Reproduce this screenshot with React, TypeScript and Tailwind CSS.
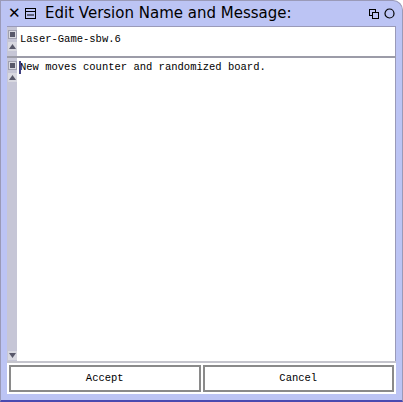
import React from 'react';

function Gutter({ children }: { children?: React.ReactNode }) {
  return <div className="w-[10px] shrink-0 bg-[#c6c6d6] flex flex-col items-center">{children}</div>;
}

function SqBtn() {
  return (
    <div className="w-[9px] h-[9px] bg-[#d8d8e0] border border-[#a0a0b0] flex items-center justify-center">
      <div className="w-[5px] h-[5px] bg-[#58586a]" />
    </div>
  );
}

function Arrow({ up }: { up?: boolean }) {
  return (
    <div className="w-[9px] h-[9px] bg-[#d8d8e0] flex items-center justify-center">
      <svg width="7" height="5" viewBox="0 0 7 5">
        <polygon points={up ? '3.5,0 7,5 0,5' : '0,0 7,0 3.5,5'} fill="#58586a" />
      </svg>
    </div>
  );
}

export default function App() {
  const mono = { fontFamily: '"Courier New", "Liberation Mono", monospace' };
  return (
    <div className="w-[403px] h-[402px] bg-white">
      <div className="w-[403px] h-[402px] rounded-tr-[10px] bg-[#bcc4f4] border border-[#9a9ab8] border-b-[2px] border-b-[#4a4ab0] flex flex-col">
        {/* title bar */}
        <div className="h-[25px] flex items-center px-[6px] text-black" style={{ fontFamily: '"DejaVu Sans", sans-serif' }}>
          <span className="text-[15px] leading-none w-[14px] ml-[1px]">✕</span>
          <svg width="11" height="11" viewBox="0 0 11 11" className="ml-[3px]">
            <rect x="0.5" y="0.5" width="10" height="10" fill="none" stroke="#000" />
            <line x1="0" y1="3.5" x2="11" y2="3.5" stroke="#000" />
            <line x1="2" y1="7" x2="9" y2="7" stroke="#000" />
          </svg>
          <span className="ml-[9px] text-[15px] leading-none">Edit Version Name and Message:</span>
          <div className="flex-1" />
          <svg width="10" height="10" viewBox="0 0 10 10" className="mr-[5px]">
            <rect x="0.5" y="0.5" width="6" height="6" fill="none" stroke="#000" />
            <rect x="3.5" y="3.5" width="6" height="6" fill="#bcc4f4" stroke="#000" />
          </svg>
          <svg width="11" height="11" viewBox="0 0 11 11" className="mr-[1px]">
            <circle cx="5.5" cy="5.5" r="4.5" fill="none" stroke="#000" strokeWidth="1.2" />
          </svg>
        </div>
        {/* body */}
        <div className="flex-1 mx-[6px] flex flex-col bg-white border-t border-[#9a9ab8]">
          <div className="h-[29px] flex">
            <Gutter>
              <div className="mt-[3px]"><SqBtn /></div>
              <div className="mt-[3px]"><Arrow up /></div>
            </Gutter>
            <div className="flex-1 border-r border-[#9a9ab8] pl-[3px] pt-[7px] text-[10.5px] leading-none text-black" style={mono}>
              Laser-Game-sbw.6
            </div>
          </div>
          <div className="h-[2px] bg-[#9c9ca8]" />
          <div className="flex-1 flex">
            <Gutter>
              <div className="mt-[3px]"><SqBtn /></div>
              <div className="mt-[3px]"><Arrow up /></div>
              <div className="flex-1" />
              <div className="mb-[1px]"><Arrow /></div>
            </Gutter>
            <div className="flex-1 border-r border-[#9a9ab8] pl-[3px] pt-[4px] text-[10.5px] leading-none text-black relative" style={mono}>
              <span className="absolute left-[2px] top-[3px] w-[2px] h-[13px] bg-[#404080]" />
              New moves counter and randomized board.
            </div>
          </div>
          <div className="h-[2px] bg-[#c4c4cc]" />
          <div className="h-[31px] flex gap-[2px] px-[2px] py-[2px] bg-white" style={mono}>
            <button className="flex-1 border-2 border-[#8a8a8a] bg-white text-[10.5px] text-black">Accept</button>
            <button className="flex-1 border-2 border-[#8a8a8a] bg-white text-[10.5px] text-black">Cancel</button>
          </div>
        </div>
        <div className="h-[6px]" />
      </div>
    </div>
  );
}
